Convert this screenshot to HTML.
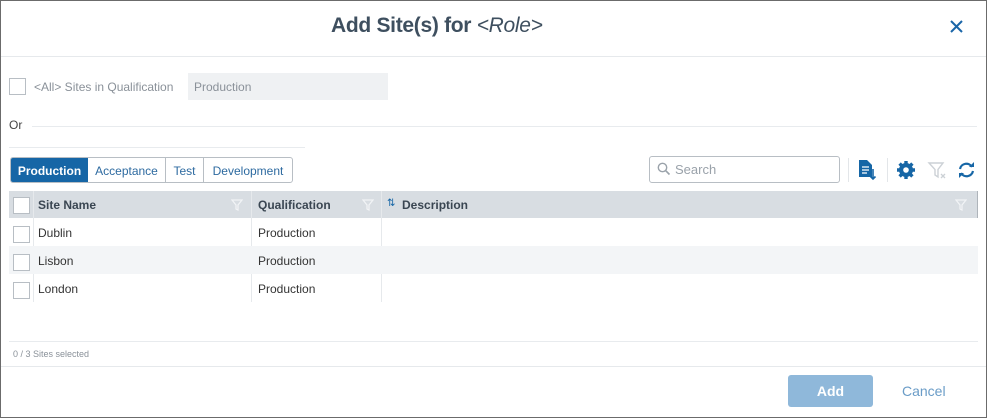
<!DOCTYPE html>
<html><head><style>
*{box-sizing:border-box;margin:0;padding:0}
body{width:987px;height:418px;background:#fff;font-family:"Liberation Sans",sans-serif;position:relative;overflow:hidden}
.abs{position:absolute}
.cb{position:absolute;width:17px;height:17px;border:1px solid #b8bec4;background:#fff}
.txt{font-size:12px;color:#333}
.tab{text-align:center;padding-top:6px;white-space:nowrap}
</style></head><body>
<div class="abs" style="left:0;top:0;width:987px;height:418px;border:1px solid #6b6b6b;z-index:5"></div>
<div class="abs" style="left:0;top:56px;width:987px;height:1px;background:#e6e9ec"></div>
<div class="abs" style="left:331px;top:14px;font-size:21px;color:#3e4f5f;font-weight:bold;letter-spacing:-0.3px">Add Site(s) for <span style="font-weight:normal;font-style:italic;">&lt;Role&gt;</span></div>
<svg class="abs" style="left:949px;top:19px" width="15" height="15"><path d="M2 2L13 13M13 2L2 13" stroke="#1a66a8" stroke-width="2"/></svg>

<div class="cb" style="left:9px;top:78px"></div>
<div class="abs" style="left:34px;top:80px;font-size:12px;color:#8a9199">&lt;All&gt; Sites in Qualification</div>
<div class="abs" style="left:188px;top:73px;width:200px;height:27px;background:#eff1f3;font-size:12px;color:#8a9199;padding:7px 6px">Production</div>
<div class="abs" style="left:9px;top:118px;font-size:12px;color:#444">Or</div>
<div class="abs" style="left:32px;top:126px;width:945px;height:1px;background:#e8ebee"></div>
<div class="abs" style="left:9px;top:147px;width:296px;height:1px;background:#e8ebee"></div>

<div class="abs" style="left:10px;top:157px;width:283px;height:26px;border:1px solid #b8bec4;border-radius:3px;display:flex;font-size:12px;color:#2d6aa0;overflow:hidden">
<div class="tab" style="background:#1666a6;color:#fff;font-weight:bold;width:77px">Production</div>
<div class="tab" style="width:78px;border-right:1px solid #b8bec4">Acceptance</div>
<div class="tab" style="width:38px;border-right:1px solid #b8bec4">Test</div>
<div class="tab" style="width:88px">Development</div>
</div>

<div class="abs" style="left:649px;top:156px;width:191px;height:27px;border:1px solid #b8bec4;border-radius:3px"></div>
<svg class="abs" style="left:657px;top:162px" width="14" height="14"><circle cx="5.5" cy="5.5" r="4.2" fill="none" stroke="#9aa2aa" stroke-width="1.4"/><path d="M8.6 8.6L12.5 12.5" stroke="#9aa2aa" stroke-width="1.6"/></svg>
<div class="abs" style="left:675px;top:162px;font-size:13px;color:#9aa2aa">Search</div>
<div class="abs" style="left:848px;top:158px;width:1px;height:24px;background:#e3e6e9"></div>
<svg class="abs" style="left:857px;top:159px" width="20" height="22"><path d="M2 1H10L15 6V18H2Z" fill="#1666a6"/><path d="M5 8H12M5 11H12M5 14H10" stroke="#fff" stroke-width="1.3"/><path d="M16 10V20M13.5 17.5L16 20L18.5 17.5" stroke="#1666a6" stroke-width="1.6" fill="none"/></svg>
<div class="abs" style="left:887px;top:158px;width:1px;height:24px;background:#e3e6e9"></div>
<svg class="abs" style="left:896px;top:160px" width="20" height="20" viewBox="0 0 20 20"><g fill="#1666a6"><circle cx="10" cy="10" r="7"/><g stroke="#1666a6" stroke-width="3.4"><path d="M10 1V19M1 10H19M3.6 3.6L16.4 16.4M16.4 3.6L3.6 16.4"/></g></g><circle cx="10" cy="10" r="2.8" fill="#fff"/></svg>
<svg class="abs" style="left:927px;top:160px" width="20" height="20"><path d="M2 3H16L11 9.5V17L8 15V9.5Z" fill="none" stroke="#ccd1d6" stroke-width="1.4"/><path d="M14 14L18 18M18 14L14 18" stroke="#ccd1d6" stroke-width="1.3"/></svg>
<svg class="abs" style="left:957px;top:161px" width="19" height="18" viewBox="0 0 19 18"><path d="M3 8A6.5 6.5 0 0 1 15 6" stroke="#1666a6" stroke-width="2.2" fill="none"/><path d="M16 10A6.5 6.5 0 0 1 4 12" stroke="#1666a6" stroke-width="2.2" fill="none"/><path d="M12 6H17V1Z" fill="#1666a6"/><path d="M7 12H2V17Z" fill="#1666a6"/></svg>

<div class="abs" style="left:9px;top:191px;width:969px;height:27px;background:#d8dde2"></div>
<div class="abs" style="left:977px;top:191px;width:1px;height:27px;background:#aeb4ba"></div>
<div class="cb" style="left:13px;top:197px"></div>
<div class="abs" style="left:33px;top:191px;width:1px;height:111px;background:#e6e9ec"></div>
<div class="abs" style="left:251px;top:191px;width:1px;height:111px;background:#e6e9ec"></div>
<div class="abs" style="left:381px;top:191px;width:1px;height:111px;background:#e6e9ec"></div>
<div class="abs txt" style="left:38px;top:198px;font-weight:bold;color:#3a4652">Site Name</div>
<div class="abs txt" style="left:258px;top:198px;font-weight:bold;color:#3a4652">Qualification</div>
<div class="abs txt" style="left:402px;top:198px;font-weight:bold;color:#3a4652">Description</div>
<div class="abs" style="left:387px;top:198px;font-size:10px;color:#1666a6">⇅</div>
<svg class="abs" style="left:231px;top:199px" width="12" height="12"><path d="M1 1H11L7 6V11L5 10V6Z" fill="none" stroke="#f2f4f6" stroke-width="1.2"/></svg>
<svg class="abs" style="left:362px;top:199px" width="12" height="12"><path d="M1 1H11L7 6V11L5 10V6Z" fill="none" stroke="#f2f4f6" stroke-width="1.2"/></svg>
<svg class="abs" style="left:955px;top:199px" width="12" height="12"><path d="M1 1H11L7 6V11L5 10V6Z" fill="none" stroke="#f2f4f6" stroke-width="1.2"/></svg>

<div class="abs" style="left:9px;top:246px;width:969px;height:28px;background:#f3f5f7"></div>
<div class="cb" style="left:13px;top:226px"></div>
<div class="cb" style="left:13px;top:254px"></div>
<div class="cb" style="left:13px;top:282px"></div>
<div class="abs txt" style="left:38px;top:226px">Dublin</div><div class="abs txt" style="left:258px;top:226px">Production</div>
<div class="abs txt" style="left:38px;top:254px">Lisbon</div><div class="abs txt" style="left:258px;top:254px">Production</div>
<div class="abs txt" style="left:38px;top:282px">London</div><div class="abs txt" style="left:258px;top:282px">Production</div>

<div class="abs" style="left:9px;top:341px;width:969px;height:1px;background:#e8ebee"></div>
<div class="abs" style="left:13px;top:349px;font-size:9px;color:#8a9199">0 / 3 Sites selected</div>
<div class="abs" style="left:0;top:366px;width:987px;height:1px;background:#e6e9ec"></div>
<div class="abs" style="left:788px;top:375px;width:85px;height:32px;background:#8fb8da;border-radius:3px;color:#fff;font-weight:bold;font-size:14px;text-align:center;line-height:32px">Add</div>
<div class="abs" style="left:902px;top:383px;font-size:14px;color:#6a9cc7">Cancel</div>
</body></html>
